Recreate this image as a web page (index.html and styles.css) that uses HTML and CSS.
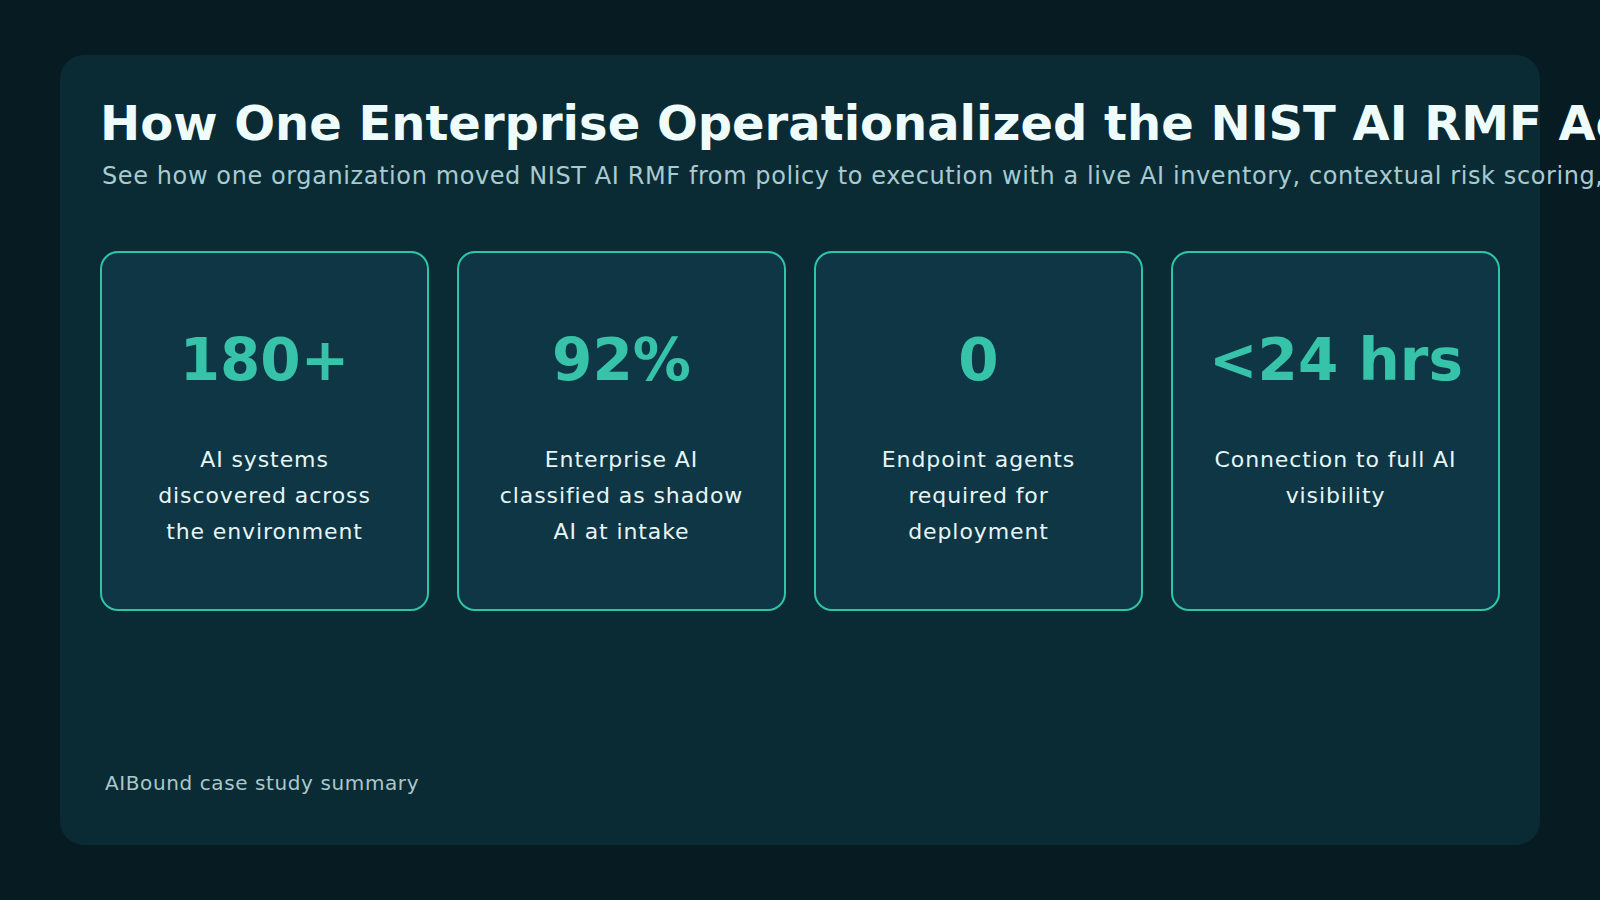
FILE: index.html
```html
<!DOCTYPE html>
<html lang="en">
<head>
<meta charset="utf-8">
<title>AIBound case study</title>
<link rel="stylesheet" href="styles.css">
</head>
<body>
<main class="page">
  <section class="panel">
    <h1 class="title">How One Enterprise Operationalized the NIST AI RMF Across Its AI Estate</h1>
    <p class="subtitle">See how one organization moved NIST AI RMF from policy to execution with a live AI inventory, contextual risk scoring, and continuous governance.</p>
    <div class="stats">
      <div class="card">
        <div class="value">180+</div>
        <div class="label">AI systems discovered across the environment</div>
      </div>
      <div class="card">
        <div class="value">92%</div>
        <div class="label">Enterprise AI classified as shadow AI at intake</div>
      </div>
      <div class="card">
        <div class="value">0</div>
        <div class="label">Endpoint agents required for deployment</div>
      </div>
      <div class="card">
        <div class="value">&lt;24 hrs</div>
        <div class="label">Connection to full AI visibility</div>
      </div>
    </div>
    <footer class="footer">AIBound case study summary</footer>
  </section>
</main>
</body>
</html>
```
FILE: styles.css
```css
html, body {
  margin: 0;
  padding: 0;
}
body {
  width: 1600px;
  height: 900px;
  overflow: hidden;
  background: #071c22;
  font-family: "DejaVu Sans", Verdana, sans-serif;
}
.page {
  box-sizing: border-box;
  width: 1600px;
  height: 900px;
  padding: 55px 60px;
}
.panel {
  box-sizing: border-box;
  width: 1480px;
  height: 790px;
  padding: 40px;
  border-radius: 24px;
  background: #0a2a34;
  display: flex;
  flex-direction: column;
}
.title {
  margin: 0;
  font-size: 48px;
  font-weight: 700;
  line-height: normal;
  color: #effcfc;
  white-space: nowrap;
}
.subtitle {
  margin: 11px 0 0;
  font-size: 24px;
  letter-spacing: 0.6px;
  line-height: normal;
  color: #a7cbd0;
  white-space: nowrap;
  padding-left: 2px;
}
.stats {
  margin-top: 61px;
  display: flex;
  gap: 28px;
}
.card {
  box-sizing: border-box;
  width: 329px;
  height: 360px;
  border: 2px solid #2fc4a7;
  border-radius: 18px;
  background: #0f3645;
  padding: 73px 36px 0;
  text-align: center;
}
.value {
  font-size: 58px;
  font-weight: 700;
  line-height: normal;
  color: #37c3a9;
  white-space: nowrap;
}
.label {
  margin-top: 48px;
  font-size: 22px;
  line-height: 36px;
  letter-spacing: 0.9px;
  color: #e6f5f5;
}
.footer {
  margin-top: auto;
  margin-bottom: 10px;
  padding-left: 5px;
  font-size: 20px;
  letter-spacing: 0.6px;
  line-height: normal;
  color: #a9c8cc;
}
```
